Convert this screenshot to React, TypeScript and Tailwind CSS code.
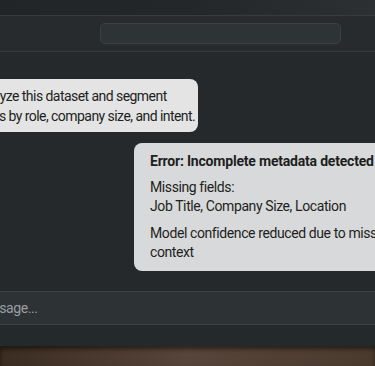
const App = () => {
  return (
    <div className="relative flex h-[366px] w-[375px] flex-col overflow-hidden bg-[#25292c] font-['Roboto',sans-serif] text-[#1d1f21]">
      <div className="h-[16px] shrink-0 border-b border-[#363b3f] bg-gradient-to-r from-[#212528] via-[#23272a] to-[#2c3033]" />
      <header className="flex h-[36px] shrink-0 items-center border-b border-[#363b3f] bg-[#272b2e]">
        <div className="ml-[100px] h-[21px] w-[241px] rounded-[5px] border border-[#3b4044] bg-[#2e3336]" />
      </header>

      <main className="flex flex-1 flex-col">
        <div className="ml-[-38px] mt-[27px] w-fit rounded-[8px] bg-[#e4e4e5] pb-[6px] pt-[7px] pl-[12px] pr-[3px] text-[14px] leading-[20px] tracking-[-0.55px]">
          <p>Analyze this dataset and segment</p>
          <p>users by role, company size, and intent.</p>
        </div>

        <div className="ml-[134px] mt-[11px] w-[300px] rounded-[8px] bg-[#d8d9da] py-[9px] pl-[16px] text-[14px] leading-[19px] tracking-[-0.4px]">
          <p className="font-bold tracking-[-0.2px]">Error: Incomplete metadata detected</p>
          <p className="mt-[7px]">Missing fields:</p>
          <p>Job Title, Company Size, Location</p>
          <p className="mt-[8px]">Model confidence reduced due to missing</p>
          <p>context</p>
        </div>

        <div className="mt-auto flex h-[34px] shrink-0 items-center border-y border-[#3d4246] bg-[#2d3235]">
          <span className="ml-[-68px] text-[14px] tracking-[-0.4px] text-[#9a9ea2]">Type a message...</span>
        </div>
        <div className="h-[21px] shrink-0 bg-[#24292c]" />
      </main>

      <div className="h-[20px] shrink-0 bg-gradient-to-r from-[#3b2d22] via-[#57443a] to-[#4a3a2e] shadow-[inset_0_3px_4px_rgba(0,0,0,0.5)]" />
    </div>
  );
};

export default App;
